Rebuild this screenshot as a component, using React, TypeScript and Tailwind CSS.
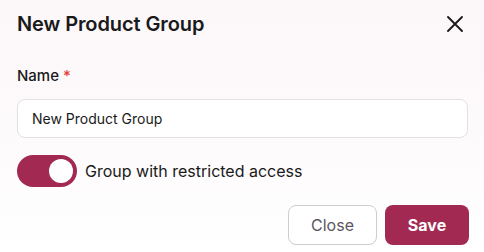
import React, { useState } from 'react'

function App() {
  const [restricted, setRestricted] = useState(true)
  const [name, setName] = useState('New Product Group')

  return (
    <div className="w-[484px] h-[252px] bg-gradient-to-b from-[#fcf7f9] via-[#fdfafb] to-white font-['Inter',sans-serif] text-[#1a1a1a]">
      {/* Header */}
      <div className="flex items-center justify-between pl-[17px] pr-[20px] pt-[10px] h-[37px]">
        <h2 className="text-[20px] font-semibold leading-none tracking-[-0.1px]">New Product Group</h2>
        <button className="text-[#1a1a1a]">
          <svg width="18" height="18" viewBox="0 0 18 18" fill="none" stroke="currentColor" strokeWidth="1.9" strokeLinecap="round">
            <path d="M2 2L16 16M16 2L2 16" />
          </svg>
        </button>
      </div>

      {/* Body */}
      <div className="px-[17px] pt-[30px]">
        <label className="block text-[15px] font-medium leading-[18px]">
          Name <span className="text-[#e0413b]">*</span>
        </label>
        <input
          value={name}
          onChange={(e) => setName(e.target.value)}
          className="mt-[14px] w-[451px] h-[39px] rounded-[8px] border border-[#e4e1e3] bg-white px-[14px] text-[14px] text-[#1a1a1a] outline-none"
        />

        <div className="mt-[17px] flex items-center gap-[8px]">
          <button
            onClick={() => setRestricted(!restricted)}
            className={restricted ? "relative w-[60px] h-[32px] rounded-full bg-[#a22a52]" : "relative w-[60px] h-[32px] rounded-full bg-gray-300"}
          >
            <span className={restricted ? "absolute top-[4px] right-[4px] w-[24px] h-[24px] rounded-full bg-white" : "absolute top-[4px] left-[4px] w-[24px] h-[24px] rounded-full bg-white"}></span>
          </button>
          <span className="text-[16px] leading-none">Group with restricted access</span>
        </div>

        <div className="mt-[18px] -mr-[2px] flex justify-end gap-[8px]">
          <button className="w-[89px] h-[40px] rounded-[8px] border border-[#cfcbd0] bg-white text-[16px] text-[#5b5661]">
            Close
          </button>
          <button className="w-[84px] h-[40px] rounded-[8px] bg-[#a22a52] text-[16px] font-bold text-white">
            Save
          </button>
        </div>
      </div>
    </div>
  )
}

export default App
